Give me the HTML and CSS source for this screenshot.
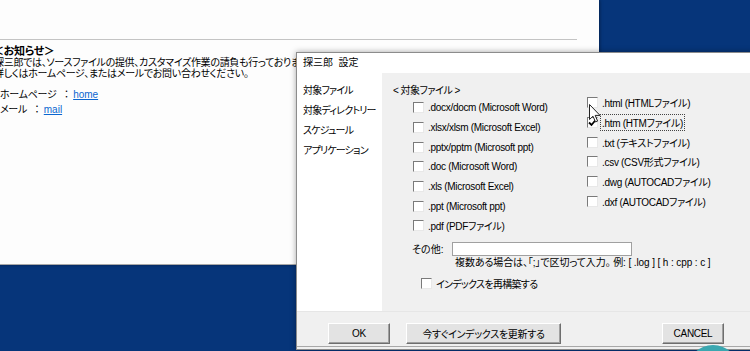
FILE: index.html
```html
<html>
<head>
    <title>探三郎 設定</title>
    <link rel="stylesheet" href="styles.css">
</head>
<body>
    <div class="site">
        <div class="site-rule"></div>
        <div class="notice">
            <div class="notice-title">＜お知らせ＞</div>
            <div>探三郎では、ソースファイルの提供、カスタマイズ作業の請負も行っております。</div>
            <div>詳しくはホームページ、またはメールでお問い合わせください。</div>
        </div>
        <div class="contacts">
            <div>ホームページ<span class="colon">：</span><a href="#">home</a></div>
            <div>メール<span class="colon">：</span><a href="#">mail</a></div>
        </div>
    </div>

    <div class="dialog">
        <div class="titlebar">探三郎&nbsp; 設定</div>
        <div class="dialog-body">
            <ul class="nav">
                <li>対象ファイル</li>
                <li>対象ディレクトリー</li>
                <li>スケジュール</li>
                <li>アプリケーション</li>
            </ul>
            <div class="panel">
                <div class="panel-title">&lt; 対象ファイル &gt;</div>
                <div class="checks">
                    <div class="col col-left">
                        <label class="check"><span class="box"></span>.docx/docm (Microsoft Word)</label>
                        <label class="check"><span class="box"></span>.xlsx/xlsm (Microsoft Excel)</label>
                        <label class="check"><span class="box"></span>.pptx/pptm (Microsoft ppt)</label>
                        <label class="check"><span class="box"></span>.doc (Microsoft Word)</label>
                        <label class="check"><span class="box"></span>.xls (Microsoft Excel)</label>
                        <label class="check"><span class="box"></span>.ppt (Microsoft ppt)</label>
                        <label class="check"><span class="box"></span>.pdf (PDFファイル)</label>
                    </div>
                    <div class="col col-right">
                        <label class="check"><span class="box"></span>.html (HTMLファイル)</label>
                        <label class="check"><span class="box checked"><svg width="9" height="9" viewBox="0 0 9 9"><path d="M1 4.5 L3.5 7 L8 1.5" fill="none" stroke="#000" stroke-width="1.8"/></svg></span><span class="focus">.htm (HTMファイル)</span></label>
                        <label class="check"><span class="box"></span>.txt (テキストファイル)</label>
                        <label class="check"><span class="box"></span>.csv (CSV形式ファイル)</label>
                        <label class="check"><span class="box"></span>.dwg (AUTOCADファイル)</label>
                        <label class="check"><span class="box"></span>.dxf (AUTOCADファイル)</label>
                    </div>
                </div>
                <div class="other">
                    <span class="other-label">その他:</span>
                    <span class="other-input"></span>
                </div>
                <div class="note">複数ある場合は、「;」で区切って入力。 例: [ .log ] [ h : cpp : c ]</div>
                <label class="check reindex"><span class="box"></span>インデックスを再構築する</label>
            </div>
        </div>
        <div class="footer">
            <button class="btn btn-ok">OK</button>
            <button class="btn btn-update">今すぐインデックスを更新する</button>
            <button class="btn btn-cancel">CANCEL</button>
        </div>
    </div>

    <svg class="cursor" width="12" height="19" viewBox="0 0 12 19">
        <path d="M0.5 0.5 L0.5 15.5 L4 12.2 L6.5 18 L8.6 17.1 L6.2 11.4 L11 11.4 Z" fill="#fff" stroke="#222" stroke-width="1"/>
    </svg>
    <div class="bubble"></div>
</body>
</html>
```

FILE: styles.css
```css
body {
    margin: 0;
    width: 750px;
    height: 351px;
    overflow: hidden;
    position: relative;
    background-color: #06357a;
    font-family: "Liberation Sans", "Noto Sans CJK JP", sans-serif;
    font-feature-settings: "palt";
    font-size: 10px;
    color: #000;
}

/* back window */
.site {
    position: absolute;
    left: -8px;
    top: 0;
    width: 607px;
    height: 264px;
    background-color: #fdfdfd;
    border-bottom: 1px solid #a8a8a8;
    box-shadow: 1px 0 3px rgba(0, 0, 0, 0.35);
    font-family: "Noto Sans CJK JP", sans-serif;
    letter-spacing: -0.3px;
}

.site-rule {
    margin-top: 39px;
    width: 585px;
    height: 1px;
    background-color: #c4c4c4;
}

.notice {
    margin-top: 5px;
    padding-left: 2px;
    line-height: 11px;
    white-space: nowrap;
}

.notice-title {
    font-weight: bold;
    font-size: 11px;
    margin-left: -1px;
}

.contacts {
    margin-top: 9px;
    padding-left: 8px;
    line-height: 14px;
}

.colon {
    font-feature-settings: normal;
    margin: 0 2px 0 5px;
}

.contacts a {
    color: #0b66d0;
    font-family: "Liberation Sans", sans-serif;
    letter-spacing: 0;
}

/* settings dialog */
.dialog {
    position: absolute;
    left: 296px;
    top: 52px;
    width: 458px;
    height: 296px;
    background-color: #f0f0f0;
    border: 1px solid #8c8c8c;
    box-shadow: 0 0 6px rgba(0, 0, 0, 0.35);
    display: flex;
    flex-direction: column;
}

.titlebar {
    height: 20px;
    line-height: 20px;
    padding-left: 6px;
    background-color: #fff;
}

.dialog-body {
    display: flex;
    height: 238px;
}

.nav {
    width: 79px;
    margin: 0;
    padding: 8px 0 0 6px;
    list-style: none;
    background-color: #fff;
    line-height: 20px;
    white-space: nowrap;
    letter-spacing: -0.8px;
}

.panel {
    flex: 1;
    padding: 11px 0 0 11px;
}

.panel-title {
    line-height: 14px;
    letter-spacing: -0.5px;
}

.checks {
    display: flex;
}

.col-left {
    width: 174px;
    margin-left: 20px;
}

.col-right {
    margin-top: -5px;
}

.check {
    display: flex;
    align-items: center;
    height: 19.7px;
    white-space: nowrap;
    letter-spacing: -0.3px;
}

.box {
    width: 9px;
    height: 9px;
    margin-right: 4px;
    background-color: #fff;
    border: 1px solid;
    border-color: #7a7a7a #e8e8e8 #e8e8e8 #7a7a7a;
    display: flex;
    align-items: center;
    justify-content: center;
}

.focus {
    border: 1px dotted #444;
    padding: 0 1px;
    margin-left: -2px;
}

.other {
    display: flex;
    align-items: center;
    height: 14px;
    margin: 6px 0 0 19px;
}

.other-label {
    width: 40px;
}

.other-input {
    width: 178px;
    height: 12px;
    background-color: #fff;
    border: 1px solid #a0a0a0;
}

.note {
    margin-left: 62px;
    line-height: 14px;
    white-space: nowrap;
    letter-spacing: -0.1px;
}

.reindex {
    height: 14px;
    margin: 7px 0 0 28px;
    letter-spacing: -0.7px;
}

.footer {
    height: 36px;
    padding: 11px 31px 0 31px;
    box-sizing: border-box;
    display: flex;
    align-items: flex-start;
    border-top: 1px solid #e6e6e6;
    border-bottom: 1px solid #a8a8a8;
}

.btn {
    height: 21px;
    padding: 0;
    font-family: "Liberation Sans", "Noto Sans CJK JP", sans-serif;
    font-feature-settings: "palt";
    font-size: 10px;
    letter-spacing: -0.3px;
    color: #000;
    background-color: #e3e3e3;
    border: 1px solid;
    border-color: #fff #6e6e6e #6e6e6e #fff;
    box-shadow: inset -1px -1px 0 #a0a0a0;
}

.btn-ok {
    width: 62px;
}

.btn-update {
    width: 155px;
    margin-left: 16px;
}

.btn-cancel {
    width: 62px;
    margin-left: auto;
}

.cursor {
    position: absolute;
    left: 589px;
    top: 104px;
}

.bubble {
    position: absolute;
    left: 687px;
    top: 345px;
    width: 52px;
    height: 52px;
    border-radius: 50%;
    background-color: #3aa7b0;
}
```
